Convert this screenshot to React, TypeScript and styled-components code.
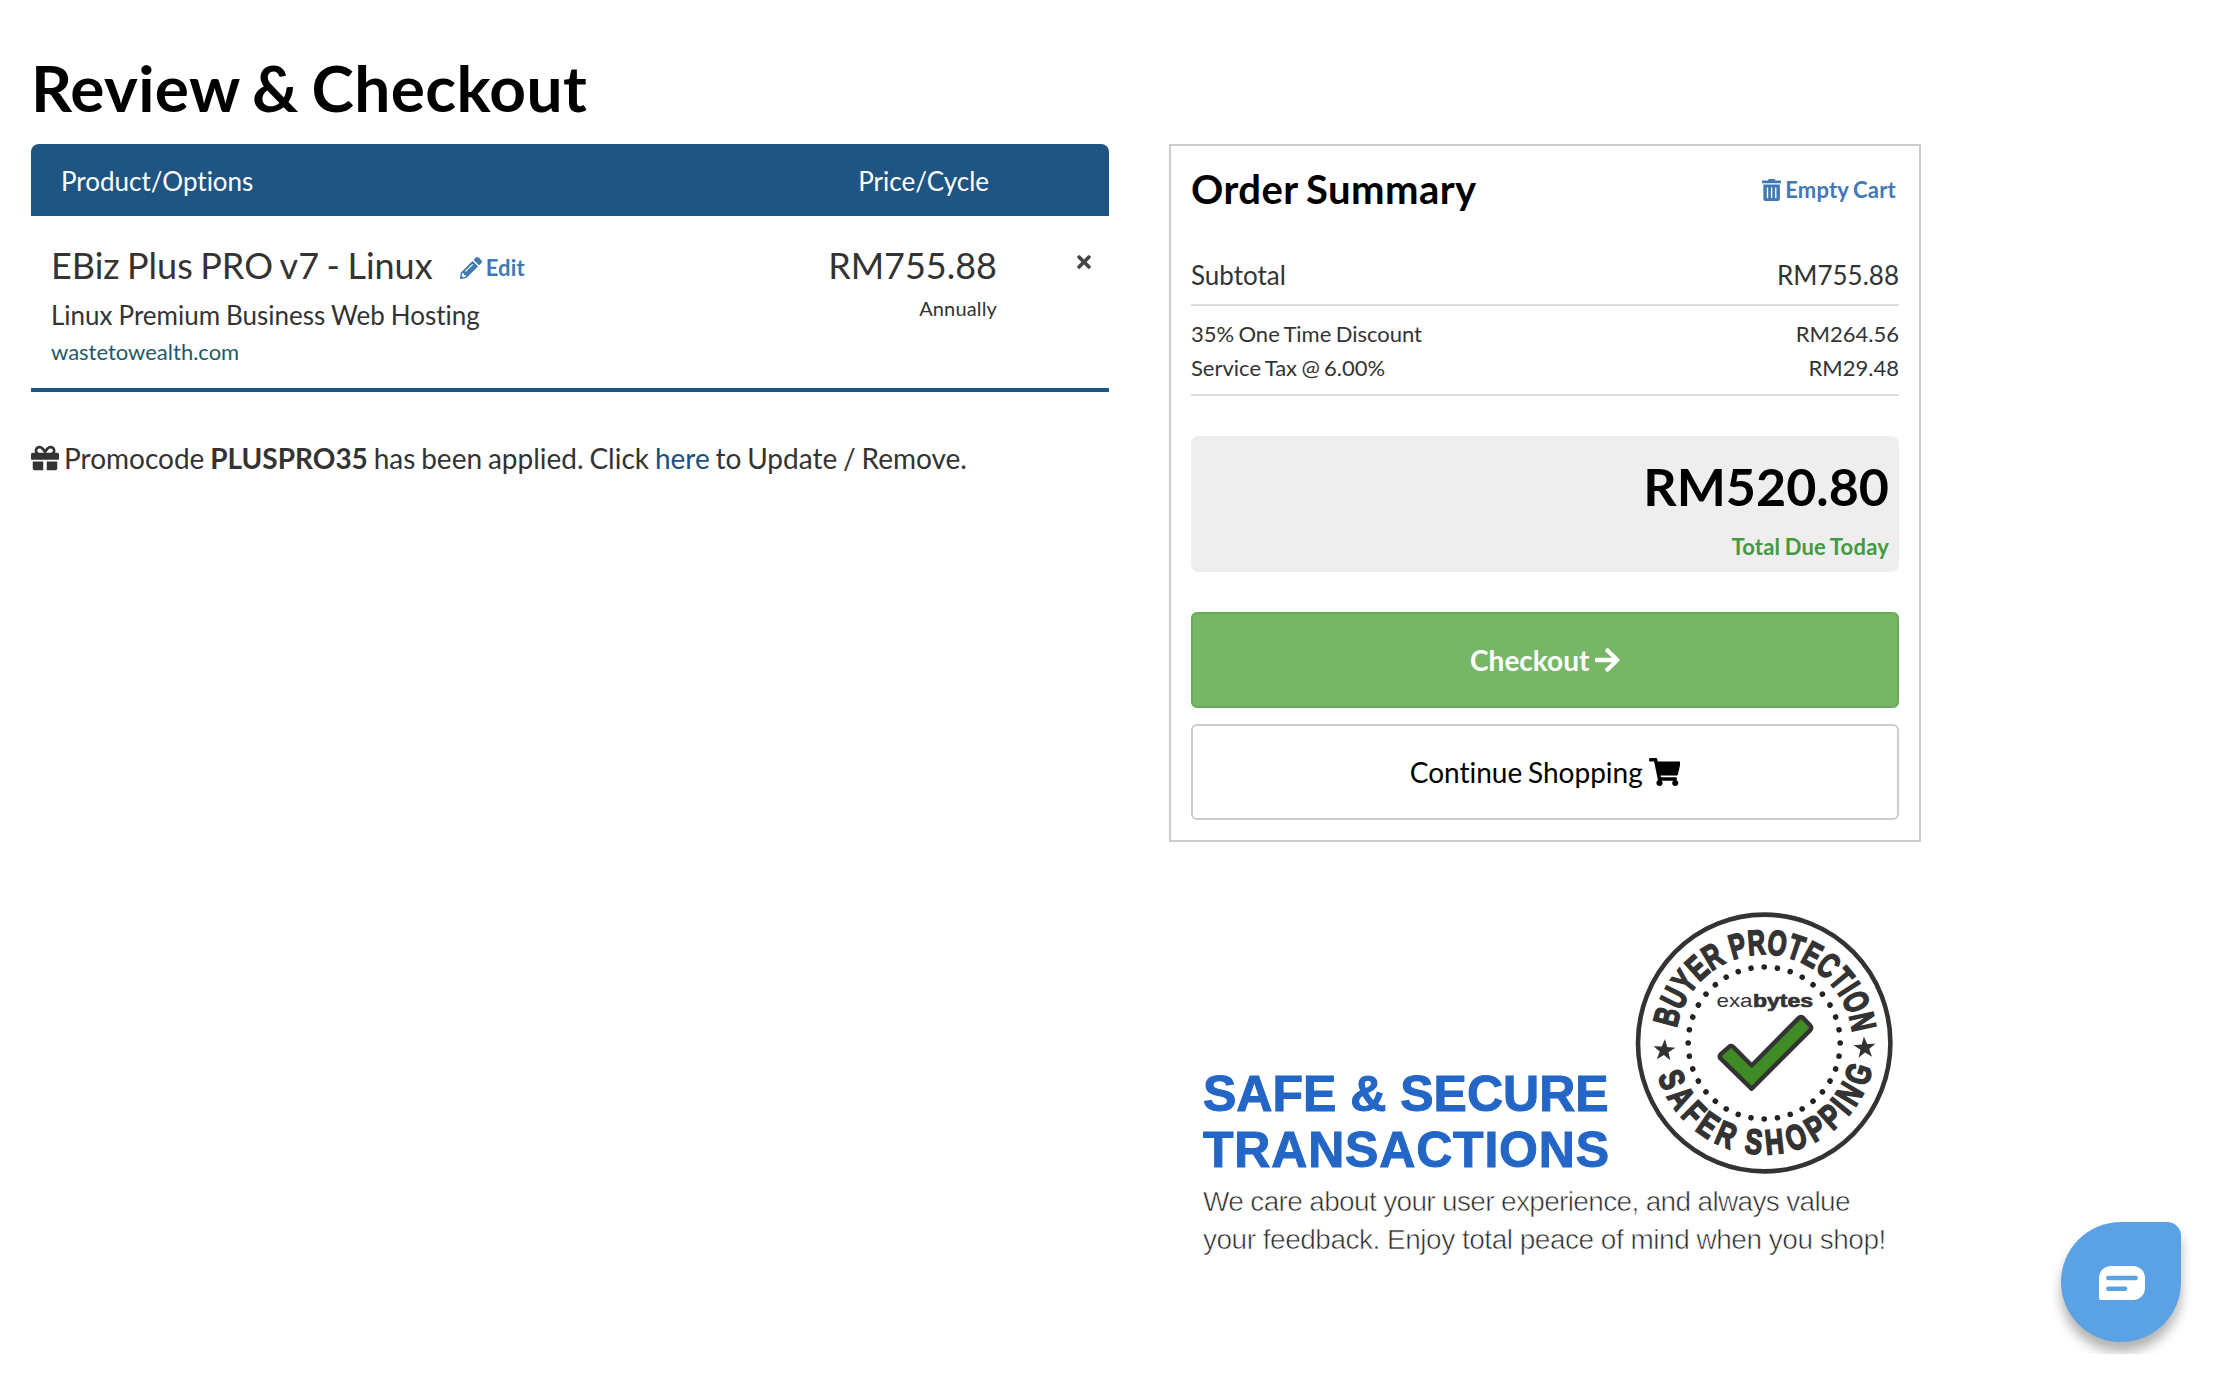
import React from 'react';
import styled, { createGlobalStyle } from 'styled-components';
import { FaArrowRight, FaGift, FaPencilAlt, FaShoppingCart, FaTimes, FaTrashAlt } from 'react-icons/fa';

const GlobalStyle = createGlobalStyle`
  * {
    box-sizing: border-box;
    word-spacing: -0.048em;
    font-variant-ligatures: none;
  }
  body {
    margin: 0;
    background: #fff;
    color: #333;
    font-family: Lato, "Liberation Sans", sans-serif;
  }
`;

const Icon = styled.span<{ $width: number; $height: number }>`
  display: inline-flex;
  flex: none;
  svg {
    width: ${(p) => p.$width}px;
    height: ${(p) => p.$height}px;
  }
`;

const Page = styled.main`
  height: 1384px;
  padding: 49px 0 0 31px;
  overflow: hidden;
`;

const PageTitle = styled.h1`
  margin: 0 0 17px;
  font-size: 64px;
  line-height: 78px;
  font-weight: 700;
  letter-spacing: 0.35px;
  color: #000;
`;

const Columns = styled.div`
  display: flex;
  align-items: flex-start;
  gap: 60px;
`;

const CartColumn = styled.section`
  width: 1078px;
`;

const SideColumn = styled.aside`
  width: 752px;
`;

const CartHeader = styled.div`
  display: flex;
  justify-content: space-between;
  align-items: center;
  height: 72px;
  padding: 1px 120px 0 30px;
  border-radius: 8px 8px 0 0;
  background: #1f5582;
  color: #fff;
  font-size: 26px;
`;

const CartItem = styled.div`
  display: flex;
  height: 176px;
  padding: 27px 18px 0 20px;
  border-bottom: 4px solid #1f5582;
`;

const ItemInfo = styled.div`
  flex: 1;
`;

const ItemName = styled.div`
  display: flex;
  align-items: center;
  gap: 27px;
  font-size: 36px;
  line-height: 44px;
`;

const ActionLink = styled.a<{ $gap: number; $drop: number }>`
  display: inline-flex;
  align-items: center;
  gap: ${(p) => p.$gap}px;
  padding-top: ${(p) => p.$drop}px;
  color: #4179b5;
  font-size: 22px;
  font-weight: 700;
  line-height: 30px;
  letter-spacing: 0.2px;
`;

const ItemGroup = styled.div`
  margin-top: 9px;
  font-size: 26px;
  line-height: 38px;
  word-spacing: -0.025em;
`;

const ItemDomain = styled.div`
  font-size: 22px;
  line-height: 36px;
  color: #205a68;
`;

const PriceColumn = styled.div`
  text-align: right;
`;

const ItemPrice = styled.div`
  font-size: 36px;
  line-height: 44px;
`;

const Cycle = styled.div`
  margin-top: 6px;
  font-size: 20px;
  line-height: 30px;
  letter-spacing: 0.15px;
`;

const RemoveButton = styled.button`
  display: flex;
  justify-content: flex-end;
  width: 94px;
  height: 40px;
  padding: 9px 0 0;
  border: 0;
  background: none;
  color: #444;
`;

const PromoLine = styled.p`
  display: flex;
  align-items: center;
  gap: 5px;
  margin: 46px 0 0;
  font-size: 28px;
  line-height: 40px;
`;

const InlineLink = styled.a`
  color: #1a4f85;
`;

const Summary = styled.div`
  height: 698px;
  padding: 21px 20px 20px;
  border: 2px solid #ccc;
`;

const SummaryHeader = styled.div`
  display: flex;
  justify-content: space-between;
  align-items: center;
  height: 44px;
  padding-right: 3px;
`;

const SummaryTitle = styled.h2`
  margin: 0;
  font-size: 40px;
  line-height: 44px;
  letter-spacing: 0.45px;
  color: #000;
`;

const SummaryRows = styled.div<{ $top: number; $pad: string; $size: number; $line: number }>`
  margin-top: ${(p) => p.$top}px;
  padding: ${(p) => p.$pad};
  border-bottom: 2px solid #ddd;
  font-size: ${(p) => p.$size}px;
  line-height: ${(p) => p.$line}px;
`;

const SummaryRow = styled.div`
  display: flex;
  justify-content: space-between;
`;

const RowLabel = styled.span`
  word-spacing: -0.06em;
`;

const TotalBox = styled.div`
  height: 136px;
  margin: 40px 0;
  padding: 19px 10px 0;
  border-radius: 8px;
  background: #eee;
  text-align: right;
  font-weight: 700;
`;

const TotalAmount = styled.div`
  font-size: 52px;
  line-height: 62px;
  color: #000;
`;

const TotalLabel = styled.div`
  margin-top: 15px;
  font-size: 22px;
  line-height: 30px;
  letter-spacing: 0.2px;
  color: #449944;
`;

const BigButton = styled.button<{ $primary?: boolean }>`
  display: flex;
  align-items: center;
  justify-content: center;
  gap: 6px;
  width: 100%;
  height: 96px;
  margin: 0 0 16px;
  padding: 0;
  border: 2px solid ${(p) => (p.$primary ? '#66aa55' : '#ccc')};
  border-radius: 6px;
  background: ${(p) => (p.$primary ? '#76b666' : '#fff')};
  color: ${(p) => (p.$primary ? '#fff' : '#000')};
  font-family: inherit;
  font-size: 28px;
  font-weight: ${(p) => (p.$primary ? 700 : 400)};
`;

const Assurance = styled.div`
  padding: 58px 0 0 34px;
  font-family: "Liberation Sans", Arial, sans-serif;
`;

const AssuranceTop = styled.div`
  display: flex;
  align-items: flex-end;
  height: 278px;
`;

const AssuranceTitle = styled.h3`
  width: 417px;
  margin: 0;
  font-size: 50px;
  line-height: 55.5px;
  color: #2466c6;
  -webkit-text-stroke: 1px #2466c6;
  white-space: nowrap;
`;

const AssuranceText = styled.p`
  margin: 5px 0 0;
  font-size: 28px;
  line-height: 38.3px;
  color: #2b2b2b;
  -webkit-text-stroke: 0.6px #fff;
  white-space: nowrap;
`;

const TextLine = styled.span<{ $spacing: number }>`
  display: block;
  letter-spacing: ${(p) => p.$spacing}px;
  word-spacing: 0;
`;

const BadgeSvg = styled.svg`
  flex: none;
  align-self: flex-start;
  display: block;
`;

const ChatDock = styled.div`
  position: fixed;
  top: 1202px;
  left: 2041px;
  width: 179px;
  height: 152px;
  padding: 20px;
  overflow: hidden;
`;

const ChatButton = styled.button`
  display: flex;
  align-items: center;
  justify-content: center;
  width: 120px;
  height: 120px;
  padding: 2px 0 0 2px;
  border: 0;
  border-radius: 60px 14px 60px 60px;
  background: #5ba2e5;
  box-shadow: 0 10px 12px rgba(0, 0, 0, 0.3);
`;

const ADVANCE: Record<string, number> = {
  A: 0.722, B: 0.722, C: 0.722, E: 0.667, F: 0.611, G: 0.778, H: 0.722, I: 0.3,
  N: 0.722, O: 0.778, P: 0.667, R: 0.722, S: 0.667, T: 0.611, U: 0.722, Y: 0.667, ' ': 0.28,
};

interface ArcTextProps {
  text: string;
  radius: number;
  from: number;
  to: number;
  squeeze: number;
}

/* Letters set one by one round the badge; angles run from the centre line. */
const ArcText = ({ text, radius, from, to, squeeze }: ArcTextProps) => {
  const total = [...text].reduce((sum, c) => sum + ADVANCE[c], 0);
  let run = 0;
  return (
    <>
      {[...text].map((c, i) => {
        const mid = run + ADVANCE[c] / 2;
        run += ADVANCE[c];
        const angle = from + ((to - from) * mid) / total;
        return (
          <text
            key={i}
            textAnchor="middle"
            transform={`rotate(${angle}) translate(0 ${radius}) scale(${squeeze} 1)`}
          >
            {c}
          </text>
        );
      })}
    </>
  );
};

const starPoints = (cx: number, cy: number, r: number, tilt: number) =>
  Array.from({ length: 10 }, (_, i) => {
    const a = ((i * 36 - 90 + tilt) * Math.PI) / 180;
    const d = i % 2 ? r * 0.4 : r;
    return `${cx + d * Math.cos(a)},${cy + d * Math.sin(a)}`;
  }).join(' ');

const Badge = () => (
  <BadgeSvg width="290" height="290" viewBox="0 0 290 290">
    <ellipse cx="144.2" cy="143" rx="126.2" ry="128.4" fill="#fff" stroke="#333" strokeWidth="4.6" />
    <g transform="translate(144.2 143)" fill="#333">
      {Array.from({ length: 36 }, (_, i) => (
        <circle key={i} r="2.8" transform={`rotate(${i * 10}) translate(0 -76)`} fill="#222" />
      ))}
      <polygon points={starPoints(-100, 7.5, 11.5, 4)} />
      <polygon points={starPoints(100.5, 5, 11.5, -4)} />
      <g fontSize="35" fontWeight="700" stroke="#333" strokeWidth="1.7">
        <ArcText text="BUYER PROTECTION" radius={-88.7} from={-80.5} to={83.5} squeeze={0.7} />
        <ArcText text="SAFER SHOPPING" radius={111.3} from={74} to={-78.5} squeeze={0.74} />
      </g>
    </g>
    <g fill="#333" fontSize="18.5">
      <text x="96.5" y="106.5" textLength="36" lengthAdjust="spacingAndGlyphs">exa</text>
      <text x="133" y="106.5" textLength="60" lengthAdjust="spacingAndGlyphs" fontWeight="700" stroke="#333" strokeWidth="0.7">bytes</text>
    </g>
    <path
      d="M108.6 147.4Q111 144.5 113.6 147.2L131.7 165.5L178.4 118.4Q181 115.8 183.6 118.4L190 125.2Q192.4 127.8 190 130.4L131.7 188.8L101 158.9Q98.6 156.5 100.8 154.2Z"
      fill="#3f8c26"
      stroke="#333"
      strokeWidth="4.4"
      strokeLinejoin="round"
    />
  </BadgeSvg>
);

const ChatIcon = () => (
  <svg width="46" height="34" viewBox="0 0 46 34">
    <path d="M12 0H34A12 12 0 0 1 46 12V22A12 12 0 0 1 34 34H2A2 2 0 0 1 0 32V12A12 12 0 0 1 12 0Z" fill="#fff" />
    <path d="M9.3 12H36.7M9.3 22.8H26.2" stroke="#5ba2e5" strokeWidth="4.4" strokeLinecap="round" />
  </svg>
);

export default function App() {
  return (
    <>
      <GlobalStyle />
      <Page>
        <PageTitle>Review &amp; Checkout</PageTitle>
        <Columns>
          <CartColumn>
            <CartHeader>
              <span>Product/Options</span>
              <span>Price/Cycle</span>
            </CartHeader>
            <CartItem>
              <ItemInfo>
                <ItemName>
                  EBiz Plus PRO v7 - Linux
                  <ActionLink $gap={4} $drop={6}>
                    <Icon $width={22} $height={22}><FaPencilAlt /></Icon>
                    Edit
                  </ActionLink>
                </ItemName>
                <ItemGroup>Linux Premium Business Web Hosting</ItemGroup>
                <ItemDomain>wastetowealth.com</ItemDomain>
              </ItemInfo>
              <PriceColumn>
                <ItemPrice>RM755.88</ItemPrice>
                <Cycle>Annually</Cycle>
              </PriceColumn>
              <RemoveButton aria-label="Remove">
                <Icon $width={14} $height={20}><FaTimes /></Icon>
              </RemoveButton>
            </CartItem>
            <PromoLine>
              <Icon $width={28} $height={28}><FaGift /></Icon>
              <span>
                Promocode <b>PLUSPRO35</b> has been applied. Click <InlineLink>here</InlineLink> to Update / Remove.
              </span>
            </PromoLine>
          </CartColumn>

          <SideColumn>
            <Summary>
              <SummaryHeader>
                <SummaryTitle>Order Summary</SummaryTitle>
                <ActionLink $gap={4} $drop={2}>
                  <Icon $width={19.25} $height={22}><FaTrashAlt /></Icon>
                  Empty Cart
                </ActionLink>
              </SummaryHeader>
              <SummaryRows $top={44} $pad="0 0 9px" $size={26} $line={40}>
                <SummaryRow>
                  <span>Subtotal</span>
                  <span>RM755.88</span>
                </SummaryRow>
              </SummaryRows>
              <SummaryRows $top={0} $pad="11px 0 9px" $size={22} $line={34}>
                <SummaryRow>
                  <RowLabel>35% One Time Discount</RowLabel>
                  <span>RM264.56</span>
                </SummaryRow>
                <SummaryRow>
                  <RowLabel>Service Tax @ 6.00%</RowLabel>
                  <span>RM29.48</span>
                </SummaryRow>
              </SummaryRows>
              <TotalBox>
                <TotalAmount>RM520.80</TotalAmount>
                <TotalLabel>Total Due Today</TotalLabel>
              </TotalBox>
              <BigButton $primary>
                Checkout
                <Icon $width={24.5} $height={28}><FaArrowRight /></Icon>
              </BigButton>
              <BigButton>
                Continue Shopping
                <Icon $width={31.5} $height={28}><FaShoppingCart /></Icon>
              </BigButton>
            </Summary>
            <Assurance>
              <AssuranceTop>
                <AssuranceTitle>
                  <TextLine $spacing={0}>SAFE &amp; SECURE</TextLine>
                  <TextLine $spacing={0.8}>TRANSACTIONS</TextLine>
                </AssuranceTitle>
                <Badge />
              </AssuranceTop>
              <AssuranceText>
                <TextLine $spacing={-0.66}>We care about your user experience, and always value</TextLine>
                <TextLine $spacing={-0.49}>your feedback. Enjoy total peace of mind when you shop!</TextLine>
              </AssuranceText>
            </Assurance>
          </SideColumn>
        </Columns>
      </Page>
      <ChatDock>
        <ChatButton aria-label="Chat">
          <ChatIcon />
        </ChatButton>
      </ChatDock>
    </>
  );
}
